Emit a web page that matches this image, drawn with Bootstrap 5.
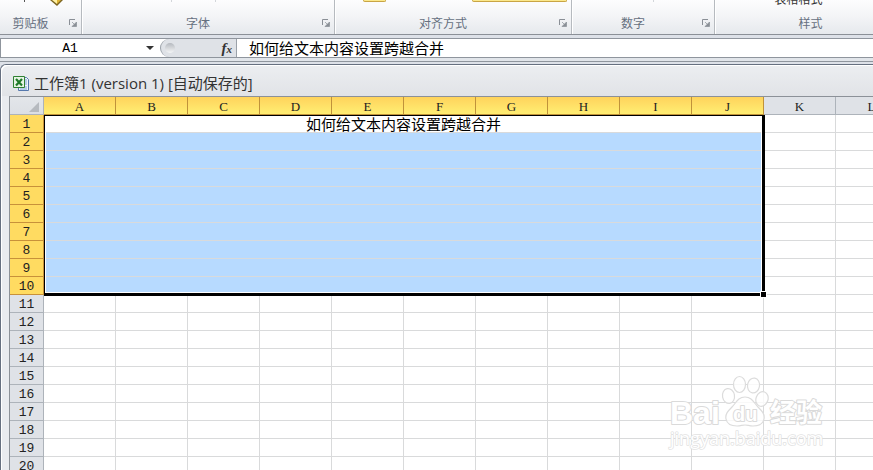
<!DOCTYPE html>
<html lang="zh-CN">
<head>
<meta charset="utf-8">
<meta name="viewport" content="width=device-width, initial-scale=1">
<title>工作簿1</title>
<link href="https://cdn.jsdelivr.net/npm/bootstrap@5.3.0/dist/css/bootstrap.min.css" rel="stylesheet">
<style>
body{font-family:"Open Sans","Noto Sans CJK SC",sans-serif;background:#dde1e8;color:#1e1e1e}
.ribbon{height:35px;background:linear-gradient(#fdfdfe,#f3f4f6 50%,#e6e9ed);border-bottom:1px solid #8b9097}
.rgroup{border-right:1px solid #b6babf;box-shadow:1px 0 #fff}
.g-clip{width:82px}.g-font{width:253px}.g-align{width:237px}.g-num{width:143px}.g-style{min-width:191px;width:191px}
.tools{height:12px}
.tools-style{font:12px/14px "Noto Sans CJK SC",sans-serif;color:#333}
.tools-style span{margin-top:-8px}
.rlabel{font:12px/22px "Noto Sans CJK SC",sans-serif;color:#66707f}
.launcher{width:20px;height:22px;color:#8a8f96}
.stub{height:2px;background:#fbe88c;border:1px solid #c9a545;border-top:0;border-radius:0 0 2px 2px}
.stub-s{width:23px;margin-left:28px}.stub-l{width:95px;margin-left:86px}
.tick{width:1px;height:2px;background:#d3d6da}
.tick-a{margin-left:89px}.tick-b{margin-left:43px}.tick-c{margin-left:81px}
.fbar{height:20px;margin-top:3px;border:solid #8f959d;border-width:1px 0;background:#fff}
.namebox{width:160px;border-left:1px solid #8f959d}
.namebox input{width:138px;height:18px;font:13px/18px "Liberation Mono",monospace;text-align:center}
.namebox input.pt-low{padding-top:2px}
.fbar input{outline:0;color:#000;background:transparent}
.fx{width:77px;background:#dfe2e7;border:solid #9ba1a9;border-width:0 1px;border-radius:9px 0 0 9px}
.knob{width:10px;height:10px;border-radius:50%;background:linear-gradient(#b5b9bf,#f5f6f7)}
.fx button{font:italic bold 15px/16px "Liberation Serif",serif;color:#333}
.fx small{font-size:11px}
.formula{font:15px/18px "Noto Sans CJK SC",sans-serif}
.rail{height:4px;background:#e1e5ea;border-bottom:1px solid #8f959d}
.book{margin-top:2px;border:solid #667080;border-width:1px 0 0 1px;border-radius:6px 0 0 0;background:#e9ebef;box-shadow:inset 1px 1px #fff}
.caption-bar{height:31px;padding:5px 0 0 12px;background:linear-gradient(#eceef1,#e1e3e7);font-size:15px;line-height:26px;border-radius:6px 0 0 0;color:#333;box-shadow:inset 1px 1px #fff}
.gridwrap{margin-left:8px;border:solid #8c9198;border-width:1px 0 0 1px;background:#fff}
.sheet{table-layout:fixed;width:100%;border-collapse:separate;border-spacing:0;line-height:17px}
.sheet th,.sheet td{height:18px;padding:0;border:solid #d9dadb;border-width:0 1px 1px 0;font-weight:400;text-align:center;white-space:nowrap}
.sheet th{background:#dfe2e7;border-color:#adb3ba;color:#222}
.sheet thead th{font:13px/15px "Liberation Serif",serif;padding-top:2px}
.sheet tbody th{font:13px/14px "Liberation Mono",monospace;padding-top:3px}
.sheet thead .on{background:linear-gradient(#ffd35c,#ffee73);border-color:#c0923a}
.sheet tbody .on{background:#ffdb61;border-color:#c8913a}
.sheet .corner{background:linear-gradient(#e3e6ea,#dcdfe4)}
.c-head{width:34px}.c-col{width:72px}
.sheet .picked{background:#b7daff}
.sheet .active-cell{font:15px/17px "Noto Sans CJK SC",sans-serif;color:#000}
.selection{top:0;left:0;right:-2px;height:181px;border:solid #000;border-width:1px 3px 3px 1px;box-shadow:inset 0 0 0 1px #fff;z-index:1}
.handle{right:-5px;bottom:-5px;width:7px;height:7px;background:#000;border:1px solid #fff}
.watermark{right:46px;bottom:16px;width:160px;height:80px}
</style>
<script src="https://cdn.jsdelivr.net/npm/bootstrap@5.3.0/dist/js/bootstrap.bundle.min.js"></script>
</head>
<body class="vh-100 overflow-hidden d-flex flex-column position-relative">
<svg class="d-none" aria-hidden="true"><symbol id="launch" viewBox="0 0 8 8"><path d="M.5 6V.5H6" fill="none" stroke="currentColor"/><path d="M3 3l3 3M7.500 3v4.500H3z" fill="currentColor" stroke="currentColor" stroke-width=".7"/></symbol></svg>
<header class="ribbon d-flex flex-shrink-0 overflow-hidden">
  <section class="rgroup g-clip flex-shrink-0">
    <div class="tools"><svg class="d-block" width="81" height="8" aria-hidden="true"><path d="M24 0h1v2h-1z" fill="#555"/><path d="M50 0h13l-6 6z" fill="#7c6521"/><path d="M52 0h5v4z" fill="#fff0a0"/><path d="M57 0h4l-4 4z" fill="#dfb434"/></svg></div>
    <div class="d-flex"><span class="rlabel flex-fill text-center">剪贴板</span><button class="btn p-0 pe-1 border-0 launcher d-flex align-items-center justify-content-end" aria-label="剪贴板选项"><svg width="8" height="8"><use href="#launch"/></svg></button></div>
  </section>
  <section class="rgroup g-font flex-shrink-0">
    <div class="tools d-flex"><i class="tick tick-a"></i><i class="tick tick-b"></i></div>
    <div class="d-flex"><span class="rlabel flex-fill text-center">字体</span><button class="btn p-0 pe-1 border-0 launcher d-flex align-items-center justify-content-end" aria-label="字体选项"><svg width="8" height="8"><use href="#launch"/></svg></button></div>
  </section>
  <section class="rgroup g-align flex-shrink-0">
    <div class="tools d-flex"><i class="stub stub-s"></i><i class="stub stub-l"></i></div>
    <div class="d-flex"><span class="rlabel flex-fill text-center">对齐方式</span><button class="btn p-0 pe-1 border-0 launcher d-flex align-items-center justify-content-end" aria-label="对齐方式选项"><svg width="8" height="8"><use href="#launch"/></svg></button></div>
  </section>
  <section class="rgroup g-num flex-shrink-0">
    <div class="tools d-flex"><i class="tick tick-c"></i></div>
    <div class="d-flex"><span class="rlabel flex-fill text-center">数字</span><button class="btn p-0 pe-1 border-0 launcher d-flex align-items-center justify-content-end" aria-label="数字选项"><svg width="8" height="8"><use href="#launch"/></svg></button></div>
  </section>
  <section class="g-style flex-shrink-0">
    <div class="tools tools-style d-flex justify-content-center pe-4"><span>表格格式</span></div>
    <div class="rlabel text-center">样式</div>
  </section>
</header>
<div class="fbar d-flex flex-shrink-0">
  <div class="namebox d-flex align-items-center flex-shrink-0">
    <input class="border-0 px-0 pb-0 pt-low" value="A1" aria-label="名称框">
    <button class="btn p-0 border-0 d-flex align-items-center justify-content-center flex-fill" aria-label="名称列表"><svg width="8" height="5"><path d="M0 0h8L4 4z" fill="#333"/></svg></button>
  </div>
  <div class="fx d-flex align-items-center justify-content-between flex-shrink-0 ps-1 pe-1"><i class="knob"></i><button class="btn p-0 border-0" aria-label="插入函数">f<small>x</small></button></div>
  <input class="formula border-0 flex-fill py-0 ps-2 ms-1" value="如何给文本内容设置跨越合并" aria-label="编辑栏">
</div>
<div class="rail flex-shrink-0"></div>
<main class="book flex-fill overflow-hidden">
  <div class="caption-bar d-flex align-items-center gap-1">
    <svg width="17" height="17" viewBox="0 0 17 17" aria-hidden="true"><path d="M5.500 2.500h8l2 2v11h-10z" fill="#eef4fc" stroke="#5578ad"/><path d="M11 5h3M11 7h3M11 9h3M7 12h7M7 14h7" stroke="#7fa3d4"/><path d="M.5 1.500h11v11H.5z" fill="#e7f4e4" stroke="#2f8132"/><path d="M3 4l6 6.500M9 4l-6 6.500" stroke="#217b2a" stroke-width="2.200"/></svg>
    <span>工作簿1 (version 1) [自动保存的]</span>
  </div>
  <div class="gridwrap overflow-hidden">
    <table class="sheet">
      <colgroup><col class="c-head"><col class="c-col" span="12"></colgroup>
      <thead><tr id="letters"><th class="corner" aria-label="全选"><svg class="d-block ms-auto me-1" width="10" height="10" aria-hidden="true"><path d="M10 0v10H0z" fill="#b6babf"/></svg></th></tr></thead>
      <tbody id="cells"></tbody>
    </table>
  </div>
</main>
<svg class="watermark position-absolute" viewBox="0 0 160 80" role="img" aria-label="Baidu 经验">
  <g fill="#fff" fill-opacity=".8" stroke="#dcdcdc" stroke-width="1.200">
    <ellipse cx="61.500" cy="22" rx="6" ry="7.500" transform="rotate(-10 61.500 22)"/><ellipse cx="72.500" cy="10.500" rx="6" ry="8"/><ellipse cx="86.500" cy="11.500" rx="6" ry="7.500" transform="rotate(10 86.500 11.500)"/><ellipse cx="95" cy="25" rx="6" ry="7.500" transform="rotate(20 95 25)"/>
    <path d="M78 23c7 0 9 6 13 10s7 7 6 12-6 7-11 7c-4 0-5-1-8-1s-4 1-8 1c-5 0-10-2-11-7s2-8 6-12 6-10 13-10z"/>
  </g>
  <g fill="#fff" stroke="#dadada" stroke-width="2" paint-order="stroke" stroke-linejoin="round">
    <text x="3" y="50" font-size="32" font-family="Liberation Sans, sans-serif" font-weight="700">Bai</text>
    <text x="66" y="47" font-size="20" font-family="Liberation Sans, sans-serif" font-weight="700">du</text>
    <text x="103" y="48" font-family="Noto Sans CJK SC, sans-serif" font-weight="700" font-size="26">经验</text>
    <text x="3" y="71" font-family="Open Sans, sans-serif" font-size="18" stroke-width="1.500" stroke="#e2e2e2">jingyan.baidu.com</text>
  </g>
</svg>
<script>
const letters = "ABCDEFGHIJKL".split("");
document.getElementById("letters").insertAdjacentHTML("beforeend",
  letters.map((l, i) => `<th scope="col" class="${i < 10 ? "on" : ""}">${l}</th>`).join(""));
let rows = "";
for (let r = 1; r <= 20; r++) {
  const merged = r === 1
    ? '<td colspan="10" class="active-cell position-relative">如何给文本内容设置跨越合并<div class="selection position-absolute"><i class="handle position-absolute"></i></div></td>'
    : '<td colspan="10" class="picked"></td>';
  rows += `<tr><th scope="row" class="${r <= 10 ? "on" : ""}">${r}</th>${r <= 10 ? merged + "<td></td><td></td>" : "<td></td>".repeat(12)}</tr>`;
}
document.getElementById("cells").innerHTML = rows;
</script>
</body>
</html>
